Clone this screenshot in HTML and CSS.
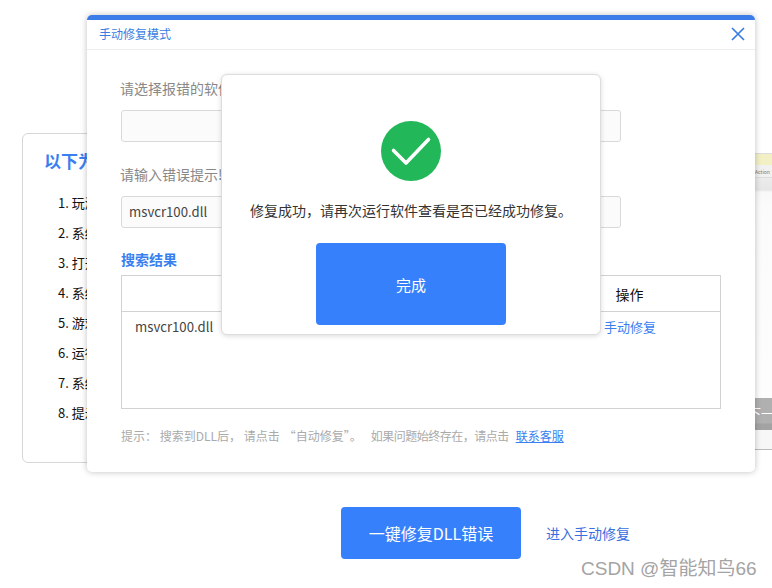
FILE: index.html
```html
<!DOCTYPE html>
<html lang="zh-CN">
<head>
<meta charset="utf-8">
<title>手动修复模式</title>
<link rel="stylesheet" href="styles.css">
</head>
<body>
<section class="info-card">
  <h2 class="info-title">以下为常见的错误原因</h2>
  <ol class="info-list">
    <li>玩游戏时缺少运行库</li>
    <li>系统文件被误删除</li>
    <li>打开软件时提示错误</li>
    <li>系统更新后文件丢失</li>
    <li>游戏安装不完整</li>
    <li>运行环境没有安装</li>
    <li>系统中毒文件损坏</li>
    <li>提示找不到DLL文件</li>
  </ol>
</section>

<div class="side-strip">
  <div class="strip-yellow"></div>
  <div class="strip-tools">Action</div>
  <div class="strip-band"></div>
  <div class="strip-next">下一</div>
  <div class="strip-foot"></div>
</div>

<section class="modal">
  <header class="modal-head">
    <span class="modal-title">手动修复模式</span>
    <svg class="modal-close" width="14" height="14" viewBox="0 0 14 14"><path d="M1 1l12 12M13 1L1 13" fill="none" stroke="#3a7de0" stroke-width="1.7"/></svg>
  </header>
  <div class="modal-body">
    <label class="field-label">请选择报错的软件</label>
    <div class="field"></div>
    <label class="field-label field-label-second">请输入错误提示!</label>
    <div class="field field-value">msvcr100.dll</div>
    <h3 class="result-title">搜索结果</h3>
    <div class="result-table">
      <div class="result-row result-head">
        <span class="col-name">文件名</span>
        <span class="col-action">操作</span>
      </div>
      <div class="result-row result-item">
        <span class="col-name col-name-value">msvcr100.dll</span>
        <a class="col-action col-link">手动修复</a>
      </div>
    </div>
    <p class="hint">提示： 搜索到DLL后， 请点击<span class="hint-quote">“自动修复”。</span><span class="hint-tail">如果问题始终存在，请点击</span><a class="hint-link">联系客服</a></p>
  </div>
</section>

<section class="success">
  <svg class="success-icon" width="60" height="60" viewBox="0 0 60 60"><circle cx="30" cy="30" r="30" fill="#22b85a"/><path d="M12.500 29.500L25 42 47.500 18.500" fill="none" stroke="#fff" stroke-width="3.600" stroke-linecap="round" stroke-linejoin="round"/></svg>
  <p class="success-text">修复成功，请再次运行软件查看是否已经成功修复。</p>
  <button class="success-btn">完成</button>
</section>

<div class="actions">
  <button class="primary-btn">一键修复DLL错误</button>
  <a class="manual-link">进入手动修复</a>
</div>

<div class="watermark">CSDN @智能知鸟66</div>
</body>
</html>
```
FILE: styles.css
```css
* { box-sizing: border-box; }
html, body { margin: 0; height: 100%; }
body {
  position: relative;
  width: 772px;
  height: 588px;
  overflow: hidden;
  background: #fff;
  font-family: "Noto Sans CJK SC", "Open Sans", sans-serif;
  color: #333;
}
.info-card {
  position: absolute;
  left: 22px;
  top: 133px;
  width: 300px;
  height: 330px;
  padding: 14px 21px;
  border: 1px solid #d6d6d6;
  border-radius: 6px;
  background: #fff;
}
.info-title {
  margin: 0;
  font-size: 17px;
  line-height: 26px;
  font-weight: 700;
  color: #3a7ff0;
}
.info-list {
  margin: 14px 0 0;
  padding: 0 0 0 14px;
  font-size: 13px;
  line-height: 30px;
  color: #111;
  list-style-position: inside;
}
.side-strip {
  position: absolute;
  left: 755px;
  top: 153px;
  width: 17px;
  height: 297px;
  display: flex;
  flex-direction: column;
  background: #fcfcfc;
}
.strip-yellow { height: 12px; background: #f2f0c4; border-top: 1px solid #ddd; }
.strip-tools {
  height: 13px;
  font-size: 5px;
  line-height: 13px;
  color: #777;
  background: #f1f1f1;
  overflow: hidden;
  border-bottom: 1px solid #ddd;
}
.strip-band {
  height: 220px;
  background: linear-gradient(#ececec 0, #e6e6e6 12px, #f8f8f8 14px, #fbfbfb 30px, #fdfdfd 100%);
}
.strip-next {
  height: 32px;
  text-indent: -7px;
  font-size: 13px;
  line-height: 30px;
  color: #fff;
  white-space: nowrap;
  overflow: hidden;
  background: linear-gradient(#b0b0b0 0, #b0b0b0 25px, #a3a3a3 26px);
}
.strip-foot { height: 20px; background: #f7f7f7; border-bottom: 1px solid #bbb; }
.modal {
  position: absolute;
  left: 87px;
  top: 15px;
  width: 668px;
  height: 457px;
  display: flex;
  flex-direction: column;
  background: #fff;
  border-top: 5px solid #3a7de8;
  border-radius: 5px;
  box-shadow: 0 0 6px rgba(0, 0, 0, .25);
}
.modal-head {
  height: 30px;
  flex: none;
  display: flex;
  align-items: center;
  justify-content: space-between;
  padding: 0 10px 2px 12px;
  border-bottom: 1px solid #eee;
}
.modal-title { font-size: 12px; color: #3a7de0; }
.modal-close { display: block; }
.modal-body { padding: 28px 34px 0; }
.field-label {
  display: block;
  font-size: 14px;
  line-height: 20px;
  color: #888;
  margin-left: -1px;
}
.field-label-second { margin-top: 22px; }
.field {
  width: 500px;
  height: 32px;
  margin-top: 12px;
  padding: 0 7px;
  border: 1px solid #d9d9d9;
  border-radius: 3px;
  background: #fbfbfb;
  font-size: 13.200px;
  line-height: 30px;
  color: #444;
}
.result-title {
  margin: 21px 0 0;
  font-size: 14px;
  line-height: 20px;
  font-weight: 700;
  color: #3a7ff0;
}
.result-table {
  width: 600px;
  height: 134px;
  margin-top: 6px;
  border: 1px solid #d2d2d2;
}
.result-row { display: flex; }
.result-head {
  height: 36px;
  align-items: center;
  border-bottom: 1px solid #d2d2d2;
  font-size: 13px;
  color: #111;
}
.result-item { padding-top: 5px; font-size: 13.200px; line-height: 20px; color: #444; }
.col-name { width: 238px; text-align: center; flex: none; }
.col-name-value { text-align: left; padding-left: 13px; width: 482px; }
.result-head .col-action { margin-left: 247px; width: 45px; text-align: center; font-size: 14px; }
.col-link { color: #3a7ff0; font-size: 13px; white-space: nowrap; }
.hint {
  margin: 17px 0 0;
  font-size: 12px;
  line-height: 20px;
  color: #aaa;
  white-space: nowrap;
}
.hint-quote { padding: 0 9px 0 4px; }
.hint-tail { letter-spacing: -.5px; }
.hint-link { color: #3a7ff0; text-decoration: underline; margin-left: 7px; }
.success {
  position: absolute;
  left: 221px;
  top: 74px;
  width: 380px;
  height: 261px;
  display: flex;
  flex-direction: column;
  align-items: center;
  padding-top: 46px;
  background: #fff;
  border: 1px solid #ddd;
  border-radius: 6px;
  box-shadow: 0 1px 5px rgba(0, 0, 0, .15);
}
.success-icon { display: block; flex: none; }
.success-text {
  margin: 17px 0 0;
  font-size: 14px;
  line-height: 24px;
  color: #333;
  white-space: nowrap;
}
.success-btn {
  width: 190px;
  height: 82px;
  margin-top: 21px;
  border: 0;
  border-radius: 4px;
  background: #3780fb;
  color: #fff;
  font: inherit;
  font-size: 15px;
}
.actions {
  position: absolute;
  left: 341px;
  top: 507px;
  display: flex;
  align-items: center;
  gap: 25px;
}
.primary-btn {
  width: 180px;
  height: 52px;
  border: 0;
  border-radius: 4px;
  background: #3780fb;
  color: #fff;
  font: inherit;
  font-size: 16px;
}
.manual-link { font-size: 14px; color: #3a6fe0; }
.watermark {
  position: absolute;
  left: 581px;
  top: 556px;
  font-family: "Liberation Sans", "Noto Sans CJK SC", sans-serif;
  font-size: 19px;
  line-height: 26px;
  color: #a4a4a4;
  white-space: nowrap;
}
```
